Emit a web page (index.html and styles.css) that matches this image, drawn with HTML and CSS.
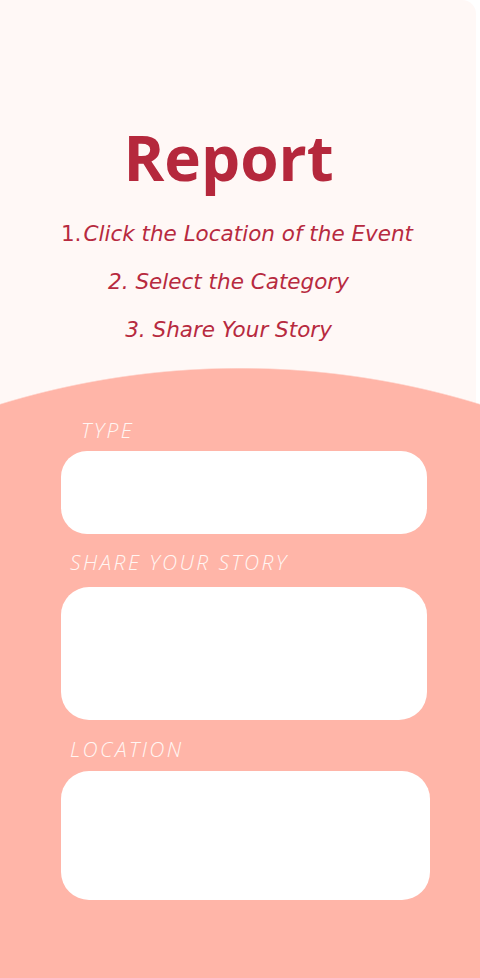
FILE: index.html
```html
<!DOCTYPE html>
<html lang="en">
<head>
<meta charset="utf-8">
<title>Report</title>
<link rel="stylesheet" href="styles.css">
</head>
<body>
<main class="page">
  <header class="intro">
    <h1 class="title">Report</h1>
    <ol class="steps">
      <li class="step step--first"><span class="step-num">1.</span><em>Click the Location of the Event</em></li>
      <li class="step"><em>2. Select the Category</em></li>
      <li class="step"><em>3. Share Your Story</em></li>
    </ol>
  </header>
  <section class="form">
    <div class="field field--type">
      <label class="label label--type">TYPE</label>
      <div class="box box--type"></div>
    </div>
    <div class="field field--story">
      <label class="label">SHARE YOUR STORY</label>
      <div class="box box--story"></div>
    </div>
    <div class="field field--location">
      <label class="label">LOCATION</label>
      <div class="box box--location"></div>
    </div>
  </section>
</main>
</body>
</html>
```

FILE: styles.css
```css
* { box-sizing: border-box; }
html, body { margin: 0; padding: 0; background: #ffffff; }
body { font-family: "Open Sans", "Liberation Sans", sans-serif; }

.page {
  width: 480px;
  height: 978px;
  display: flex;
  flex-direction: column;
  overflow: hidden;
}

.intro {
  width: 476px;
  background: #fff8f6;
  border-top-right-radius: 14px;
  padding: 126px 19px 14px 0;
  text-align: center;
}

.title {
  margin: 0;
  font-family: "Open Sans", sans-serif;
  font-weight: 700;
  font-size: 62px;
  line-height: 62px;
  color: #b5283c;
}

.steps {
  list-style: none;
  margin: 22px 0 0;
  padding: 0;
}

.step {
  font-family: "DejaVu Sans", "Open Sans", sans-serif;
  font-size: 21.5px;
  line-height: 48px;
  font-weight: 400;
  color: #b72a3f;
}
.step em { font-style: italic; }
.step--first { padding-left: 17px; }
.step-num { font-style: normal; margin-right: 2px; }

.form {
  flex: 1;
  padding: 50px 0 0;
  background:
    radial-gradient(circle 818px at 240px 818px, #ffb5a8 817px, rgba(255,181,168,0) 818.5px),
    linear-gradient(to right, #fff8f6 476px, #ffffff 476px);
  display: flex;
  flex-direction: column;
}

.field { display: flex; flex-direction: column; }
.field--story { margin-top: 16px; }
.field--location { margin-top: 17px; }

.label {
  font-family: "Open Sans", sans-serif;
  font-style: italic;
  font-weight: 300;
  font-size: 21px;
  line-height: 24px;
  letter-spacing: 2.4px;
  color: #fff6f3;
  padding-left: 70px;
}
.label--type { padding-left: 81px; }

.box {
  margin-left: 61px;
  width: 366px;
  background: #ffffff;
  border-radius: 26px;
}
.box--type { height: 83px; margin-top: 9px; }
.box--story { height: 133px; margin-top: 13px; border-radius: 28px; }
.box--location { height: 129px; margin-top: 10px; width: 369px; border-radius: 28px; }
```
